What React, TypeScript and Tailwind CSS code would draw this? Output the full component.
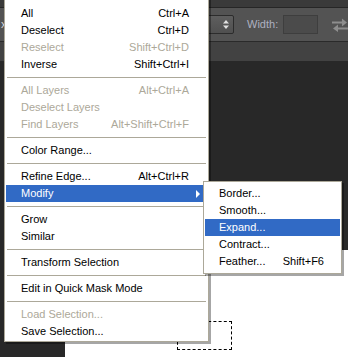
type Item =
  | { sep: true }
  | {
      sep?: false;
      label: string;
      shortcut?: string;
      disabled?: boolean;
      active?: boolean;
      arrow?: boolean;
    };

const mainItems: Item[] = [
  { label: "All", shortcut: "Ctrl+A" },
  { label: "Deselect", shortcut: "Ctrl+D" },
  { label: "Reselect", shortcut: "Shift+Ctrl+D", disabled: true },
  { label: "Inverse", shortcut: "Shift+Ctrl+I" },
  { sep: true },
  { label: "All Layers", shortcut: "Alt+Ctrl+A", disabled: true },
  { label: "Deselect Layers", disabled: true },
  { label: "Find Layers", shortcut: "Alt+Shift+Ctrl+F", disabled: true },
  { sep: true },
  { label: "Color Range..." },
  { sep: true },
  { label: "Refine Edge...", shortcut: "Alt+Ctrl+R" },
  { label: "Modify", active: true, arrow: true },
  { sep: true },
  { label: "Grow" },
  { label: "Similar" },
  { sep: true },
  { label: "Transform Selection" },
  { sep: true },
  { label: "Edit in Quick Mask Mode" },
  { sep: true },
  { label: "Load Selection...", disabled: true },
  { label: "Save Selection..." },
];

const subItems: Item[] = [
  { label: "Border..." },
  { label: "Smooth..." },
  { label: "Expand...", active: true },
  { label: "Contract..." },
  { label: "Feather...", shortcut: "Shift+F6" },
];

function MenuRow({ item, sub }: { item: Item; sub?: boolean }) {
  if (item.sep) {
    return <div className="my-[4px] mx-[1px] h-px bg-[#aca899]" />;
  }
  const color = item.active
    ? "bg-[#316ac5] text-white"
    : item.disabled
      ? "text-[#aca899]"
      : "text-black";
  return (
    <div
      className={`flex h-[17px] items-center justify-between ${
        sub ? "pl-[14px] pr-[16px]" : "pl-[15px] pr-[18px]"
      } ${color} relative`}
    >
      <span>{item.label}</span>
      {item.shortcut && <span>{item.shortcut}</span>}
      {item.arrow && (
        <svg
          className="absolute right-[6px] top-[5px]"
          width="5"
          height="8"
          viewBox="0 0 5 8"
        >
          <path d="M0 0 L4 4 L0 8 Z" fill="white" />
        </svg>
      )}
    </div>
  );
}

export default function App() {
  return (
    <div
      className="relative w-[348px] h-[357px] overflow-hidden bg-[#282828] flex flex-col text-[11px] leading-none"
      style={{ fontFamily: '"Liberation Sans", Arial, sans-serif' }}
    >
      {/* options bar */}
      <div className="h-[8px] bg-[#3a3a3a] border-b border-[#262626]" />
      <div className="h-[34px] bg-[#535353] border-b border-[#2a2a2a] flex items-center">
        <div className="w-[155px] pl-px">
          <span className="text-[#d8d8d8]">x</span>
        </div>
        <div className="w-[80px] h-[19px] rounded-[2px] border border-[#2c2c2c] bg-gradient-to-b from-[#5e5e5e] to-[#505050] flex items-center justify-end pr-[4px]">
          <svg width="6" height="9" viewBox="0 0 6 9">
            <path d="M0 3.5 L3 0 L6 3.5 Z" fill="#e0e0e0" />
            <path d="M0 5.5 L3 9 L6 5.5 Z" fill="#e0e0e0" />
          </svg>
        </div>
        <span className="ml-[13px] text-[#adb0c0]">Width:</span>
        <div className="ml-[5px] w-[35px] h-[19px] bg-[#4b4b4b] border border-[#3e3e3e]" />
        <svg className="ml-[14px]" width="16" height="14" viewBox="0 0 16 14">
          <path d="M0 4.5 H11" stroke="#8e8e8e" strokeWidth="2" />
          <path d="M10 0.5 L15 4.5 L10 8.5 Z" fill="#8e8e8e" />
          <path d="M5 10.5 H16" stroke="#8e8e8e" strokeWidth="2" />
          <path d="M6 6.5 L1 10.5 L6 14 Z" fill="#8e8e8e" />
        </svg>
      </div>
      <div className="h-[19px] bg-[#424242]" />

      {/* workspace with canvas */}
      <div className="flex-1 pt-[189px] pl-[65px]">
        <div className="relative h-full bg-white">
          <div className="absolute left-[112px] top-[71px] w-[55px] h-[29px] border border-dashed border-black" />
        </div>
      </div>

      {/* Select menu */}
      <div className="absolute left-[4px] top-[-2px] w-[205px] bg-white border border-[#aca899] pt-[6px] pb-[1px] px-px shadow-[2px_2px_0_rgba(0,0,0,0.35)]">
        {mainItems.map((item, i) => (
          <MenuRow key={i} item={item} />
        ))}
      </div>

      {/* Modify submenu */}
      <div className="absolute left-[203px] top-[181px] w-[139px] bg-white border border-[#aca899] py-[3px] px-px shadow-[2px_2px_0_rgba(0,0,0,0.35)]">
        {subItems.map((item, i) => (
          <MenuRow key={i} item={item} sub />
        ))}
      </div>
    </div>
  );
}
